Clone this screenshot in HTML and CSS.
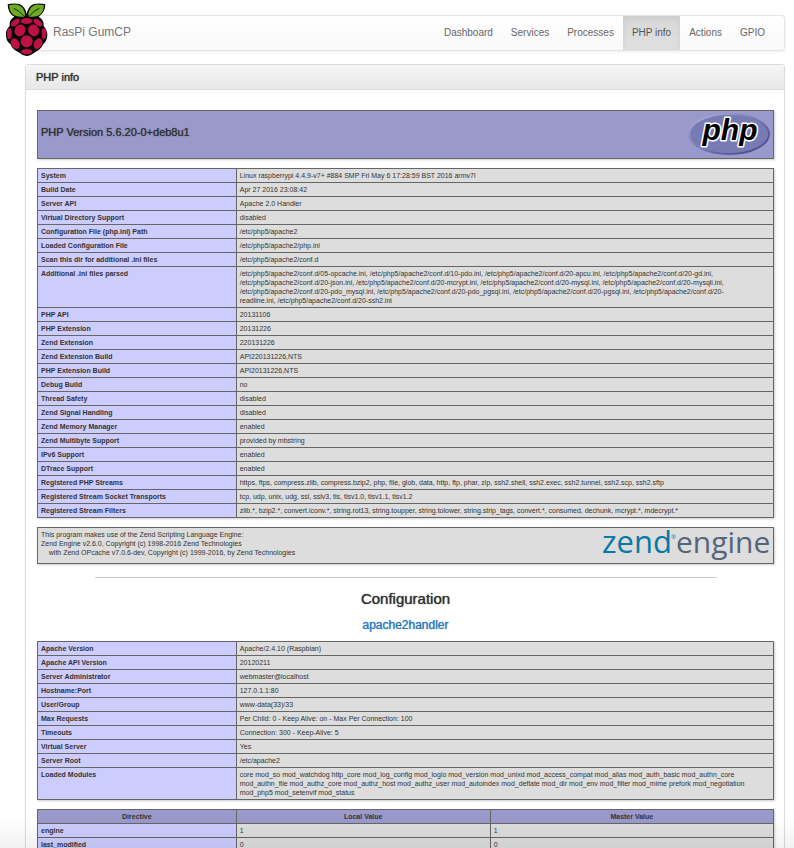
FILE: index.html
```html
<!DOCTYPE html>
<html lang="en">
<head>
<meta charset="utf-8">
<title>RasPi GumCP</title>
<link rel="stylesheet" href="styles.css">
</head>
<body>
<header class="navbar">
  <svg class="berry" viewBox="0 0 168 168" aria-hidden="true">
    <path d="M80 42 Q76 20 58 12 Q38 8 23 13 Q23 40 43 50 Q26 60 29 78 Q16 90 18 108 Q20 126 31 132 Q38 149 56 157 Q68 168 80 168 Q92 168 105 157 Q122 149 130 132 Q141 124 142 106 Q142 90 131 78 Q133 60 116 50 Q136 38 136 13 Q120 8 101 12 Q84 20 80 42Z" fill="#080808"/>
    <path d="M27 16 Q68 6 75 40 Q76 48 72 50 Q30 55 27 16ZM132 16 Q92 6 85 40 Q84 48 88 50 Q129 55 132 16Z" fill="#6eaa22"/>
    <path d="M41 25 Q58 31 71 48M118 25 Q101 31 89 48" fill="none" stroke="#172a08" stroke-width="3"/>
    <g fill="#bd1143">
      <ellipse cx="80" cy="63" rx="18" ry="9"/>
      <ellipse cx="46" cy="68" rx="15" ry="8" transform="rotate(-38 46 68)"/>
      <ellipse cx="114" cy="68" rx="15" ry="8" transform="rotate(38 114 68)"/>
      <ellipse cx="60" cy="91" rx="16" ry="18" transform="rotate(30 60 91)"/>
      <ellipse cx="101" cy="91" rx="16" ry="18" transform="rotate(-30 101 91)"/>
      <ellipse cx="28" cy="101" rx="7" ry="16"/>
      <ellipse cx="132" cy="101" rx="7" ry="16"/>
      <circle cx="80" cy="124" r="18"/>
      <ellipse cx="46" cy="131" rx="12" ry="17" transform="rotate(-28 46 131)"/>
      <ellipse cx="114" cy="131" rx="12" ry="17" transform="rotate(28 114 131)"/>
      <ellipse cx="80" cy="155" rx="17" ry="8"/>
    </g>
  </svg>
  <a class="brand" href="#">RasPi GumCP</a>
  <nav class="menu">
    <a href="#">Dashboard</a>
    <a href="#">Services</a>
    <a href="#">Processes</a>
    <a class="active" href="#">PHP info</a>
    <a href="#">Actions</a>
    <a href="#">GPIO</a>
  </nav>
</header>

<main class="panel">
  <h1 class="panel-heading">PHP info</h1>
  <div class="panel-body">
    <section class="box version">
      <h2>PHP Version 5.6.20-0+deb8u1</h2>
      <svg class="php-logo" viewBox="0 0 84 46" role="img" aria-label="PHP logo">
        <defs>
          <linearGradient id="rim" x1="0" y1="0" x2="1" y2="1">
            <stop offset="0" stop-color="#b4b6dc"/>
            <stop offset=".45" stop-color="#7a7db5"/>
            <stop offset="1" stop-color="#404187"/>
          </linearGradient>
        </defs>
        <ellipse cx="42" cy="22" rx="40" ry="20" fill="#777bb3" stroke="url(#rim)" stroke-width="2"/>
        <text class="php-text" x="43" y="28" text-anchor="middle">php</text>
      </svg>
    </section>

    <table class="info">
      <tbody>
      <tr><th>System</th><td>Linux raspberrypi 4.4.9-v7+ #884 SMP Fri May 6 17:28:59 BST 2016 armv7l</td></tr>
      <tr><th>Build Date</th><td>Apr 27 2016 23:08:42</td></tr>
      <tr><th>Server API</th><td>Apache 2.0 Handler</td></tr>
      <tr><th>Virtual Directory Support</th><td>disabled</td></tr>
      <tr><th>Configuration File (php.ini) Path</th><td>/etc/php5/apache2</td></tr>
      <tr><th>Loaded Configuration File</th><td>/etc/php5/apache2/php.ini</td></tr>
      <tr><th>Scan this dir for additional .ini files</th><td>/etc/php5/apache2/conf.d</td></tr>
      <tr><th>Additional .ini files parsed</th><td>/etc/php5/apache2/conf.d/05-opcache.ini, /etc/php5/apache2/conf.d/10-pdo.ini, /etc/php5/apache2/conf.d/20-apcu.ini, /etc/php5/apache2/conf.d/20-gd.ini,<br>/etc/php5/apache2/conf.d/20-json.ini, /etc/php5/apache2/conf.d/20-mcrypt.ini, /etc/php5/apache2/conf.d/20-mysql.ini, /etc/php5/apache2/conf.d/20-mysqli.ini,<br>/etc/php5/apache2/conf.d/20-pdo_mysql.ini, /etc/php5/apache2/conf.d/20-pdo_pgsql.ini, /etc/php5/apache2/conf.d/20-pgsql.ini, /etc/php5/apache2/conf.d/20-<br>readline.ini, /etc/php5/apache2/conf.d/20-ssh2.ini</td></tr>
      <tr><th>PHP API</th><td>20131106</td></tr>
      <tr><th>PHP Extension</th><td>20131226</td></tr>
      <tr><th>Zend Extension</th><td>220131226</td></tr>
      <tr><th>Zend Extension Build</th><td>API220131226,NTS</td></tr>
      <tr><th>PHP Extension Build</th><td>API20131226,NTS</td></tr>
      <tr><th>Debug Build</th><td>no</td></tr>
      <tr><th>Thread Safety</th><td>disabled</td></tr>
      <tr><th>Zend Signal Handling</th><td>disabled</td></tr>
      <tr><th>Zend Memory Manager</th><td>enabled</td></tr>
      <tr><th>Zend Multibyte Support</th><td>provided by mbstring</td></tr>
      <tr><th>IPv6 Support</th><td>enabled</td></tr>
      <tr><th>DTrace Support</th><td>enabled</td></tr>
      <tr><th>Registered PHP Streams</th><td>https, ftps, compress.zlib, compress.bzip2, php, file, glob, data, http, ftp, phar, zip, ssh2.shell, ssh2.exec, ssh2.tunnel, ssh2.scp, ssh2.sftp</td></tr>
      <tr><th>Registered Stream Socket Transports</th><td>tcp, udp, unix, udg, ssl, sslv3, tls, tlsv1.0, tlsv1.1, tlsv1.2</td></tr>
      <tr><th>Registered Stream Filters</th><td>zlib.*, bzip2.*, convert.iconv.*, string.rot13, string.toupper, string.tolower, string.strip_tags, convert.*, consumed, dechunk, mcrypt.*, mdecrypt.*</td></tr>
      </tbody>
    </table>

    <section class="box zend">
      <p>This program makes use of the Zend Scripting Language Engine:<br>Zend Engine v2.6.0, Copyright (c) 1998-2016 Zend Technologies<br>&nbsp;&nbsp;&nbsp;&nbsp;with Zend OPcache v7.0.6-dev, Copyright (c) 1999-2016, by Zend Technologies</p>
      <svg class="zend-logo" viewBox="0 0 172 35" role="img" aria-label="Zend Engine logo">
        <text class="zend-text" x="3" y="25">zend</text>
        <text class="zend-mark" x="72" y="11">®</text>
        <text class="engine-text" x="77" y="25">engine</text>
      </svg>
    </section>

    <hr>
    <h2 class="title">Configuration</h2>
    <h3 class="module"><a href="#">apache2handler</a></h3>

    <table class="info">
      <tbody>
      <tr><th>Apache Version</th><td>Apache/2.4.10 (Raspbian)</td></tr>
      <tr><th>Apache API Version</th><td>20120211</td></tr>
      <tr><th>Server Administrator</th><td>webmaster@localhost</td></tr>
      <tr><th>Hostname:Port</th><td>127.0.1.1:80</td></tr>
      <tr><th>User/Group</th><td>www-data(33)/33</td></tr>
      <tr><th>Max Requests</th><td>Per Child: 0 - Keep Alive: on - Max Per Connection: 100</td></tr>
      <tr><th>Timeouts</th><td>Connection: 300 - Keep-Alive: 5</td></tr>
      <tr><th>Virtual Server</th><td>Yes</td></tr>
      <tr><th>Server Root</th><td>/etc/apache2</td></tr>
      <tr><th>Loaded Modules</th><td>core mod_so mod_watchdog http_core mod_log_config mod_logio mod_version mod_unixd mod_access_compat mod_alias mod_auth_basic mod_authn_core<br>mod_authn_file mod_authz_core mod_authz_host mod_authz_user mod_autoindex mod_deflate mod_dir mod_env mod_filter mod_mime prefork mod_negotiation<br>mod_php5 mod_setenvif mod_status</td></tr>
      </tbody>
    </table>

    <table class="info directives">
      <thead>
      <tr><th>Directive</th><th>Local Value</th><th>Master Value</th></tr>
      </thead>
      <tbody>
      <tr><th>engine</th><td>1</td><td>1</td></tr>
      <tr><th>last_modified</th><td>0</td><td>0</td></tr>
      </tbody>
    </table>
  </div>
</main>
</body>
</html>
```

FILE: styles.css
```css
* {
  box-sizing: border-box;
}

body {
  height: 100vh;
  margin: 0;
  padding: 15px 9px 0 25px;
  overflow: hidden;
  background: #fff;
  color: #333;
  font: 10px/14px "Liberation Sans", Arial, sans-serif;
}

/* soft shade along the bottom edge of the window */
body::after {
  content: "";
  position: fixed;
  inset: auto 0 0;
  height: 30px;
  background: linear-gradient(rgba(0, 0, 0, 0), rgba(0, 0, 0, .05));
  pointer-events: none;
}

a {
  color: #337ab7;
  text-decoration: none;
}

.navbar {
  position: relative;
  display: flex;
  justify-content: space-between;
  padding: 0 10px 0 27px;
  border: 1px solid #e5e5e5;
  border-radius: 3px;
  background: linear-gradient(#fff, #f8f8f8);
  box-shadow: 0 1px 3px rgba(0, 0, 0, .08);
}

.berry {
  position: absolute;
  top: -16px;
  left: -26px;
  width: 56px;
  height: 56px;
}

.brand {
  color: #777;
  font-size: 12px;
  line-height: 32px;
}

.menu {
  display: flex;
}

.menu a {
  padding: 0 9px;
  color: #666;
  line-height: 34px;
}

.menu .active {
  background: linear-gradient(#d8d8d8, #e0e0e0);
  box-shadow: inset 0 2px 6px rgba(0, 0, 0, .07);
  color: #555;
}

.panel {
  margin-top: 13px;
  border: 1px solid #ddd;
  border-radius: 3px;
  box-shadow: 0 1px 2px rgba(0, 0, 0, .05);
}

.panel-heading {
  margin: 0;
  padding: 0 10px;
  border-bottom: 1px solid #ddd;
  background: linear-gradient(#f5f5f5, #e8e8e8);
  font-size: 11px;
  font-weight: 400;
  line-height: 24px;
}

.panel-heading,
.version h2,
.title,
.module {
  text-shadow: 0 0 1px currentColor;
}

.panel-body {
  padding: 20px 10px 10px 11px;
}

.box {
  display: flex;
  justify-content: space-between;
  margin-bottom: 9px;
  border: 1px solid #666;
  box-shadow: 1px 1px 2px #ccc;
}

.version {
  align-items: center;
  height: 49px;
  padding: 0 2px 0 3px;
  background: #99c;
}

.version h2 {
  margin: 0 0 6px;
  font-size: 11px;
  font-weight: 400;
}

.php-logo {
  width: 84px;
  height: 46px;
}

.php-text {
  fill: #000;
  stroke: #fff;
  stroke-width: 3px;
  stroke-linejoin: round;
  paint-order: stroke;
  font: italic 700 30px "Liberation Sans", Arial, sans-serif;
}

.info {
  width: 100%;
  margin-bottom: 9px;
  border-collapse: collapse;
  table-layout: fixed;
  box-shadow: 1px 1px 2px #ccc;
  font-size: 7px;
  line-height: 9px;
}

.info th,
.info td {
  padding: 2px 3px;
  border: 1px solid #666;
  background: #ddd;
  text-align: left;
  vertical-align: top;
}

.info th {
  background: #ccf;
}

.info th:first-child {
  width: 27%;
}

.info thead th {
  background: #99c;
  text-align: center;
}

.directives th:nth-child(2) {
  width: 34.5%;
}

.zend {
  height: 37px;
  margin-bottom: 13px;
  padding: 0 2px 0 3px;
  background: #ddd;
}

.zend p {
  margin: 2px 0 0;
  font-size: 7px;
  line-height: 9px;
}

.zend-logo {
  width: 172px;
  height: 35px;
  overflow: visible;
}

.zend-text {
  fill: #0679a5;
  font: 500 31px "Open Sans", sans-serif;
}

.zend-mark {
  fill: #0679a5;
  font: 6px "Open Sans", sans-serif;
}

.engine-text {
  fill: #54657a;
  font: 30px "Open Sans", sans-serif;
}

hr {
  width: 622px;
  max-width: 100%;
  height: 1px;
  margin: 0 auto;
  border: 0;
  background: #ccc;
}

.title {
  margin: 13px 0 11px;
  font-size: 15px;
  font-weight: 400;
  line-height: 16px;
  text-align: center;
}

.module {
  margin: 0 0 8px;
  font-size: 12px;
  font-weight: 400;
  line-height: 15px;
  text-align: center;
}
```
